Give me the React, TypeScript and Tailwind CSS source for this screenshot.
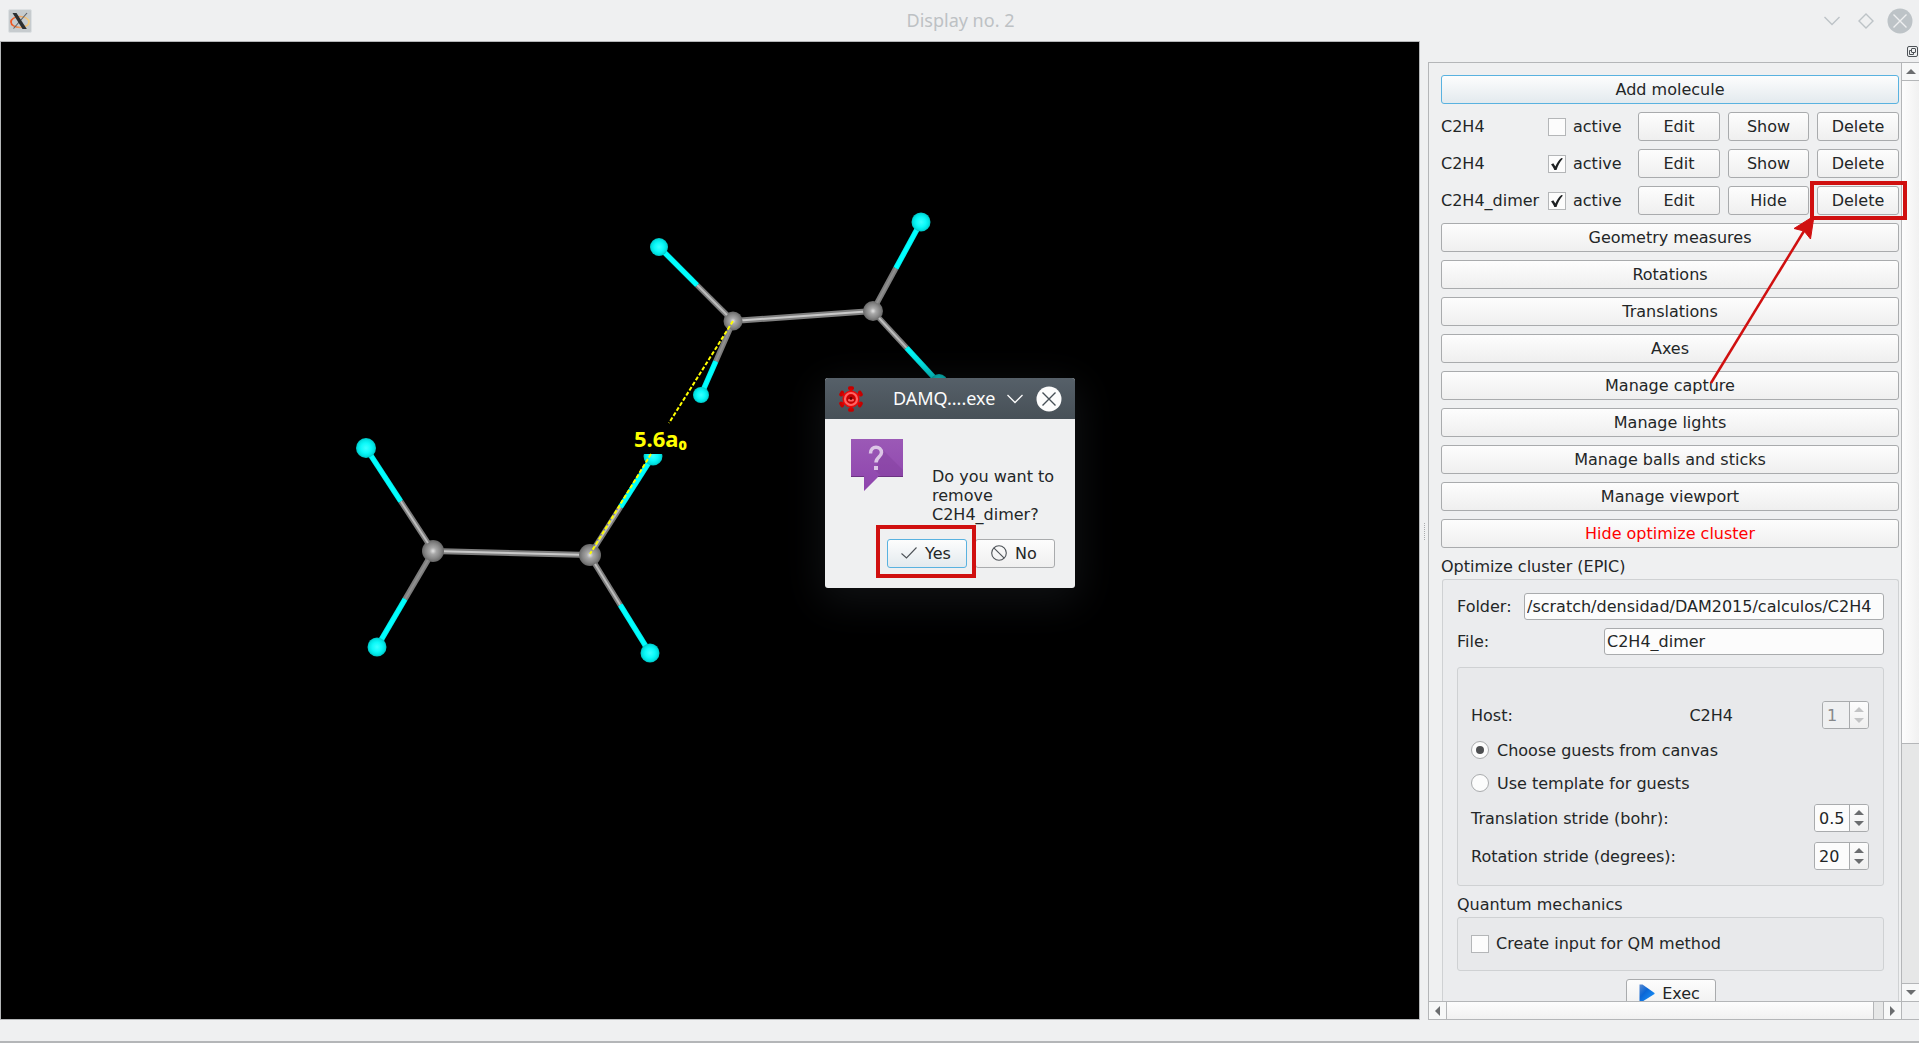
import React, { useId, useState } from "react";

const FACE = "bg-gradient-to-b from-[#fdfdfd] to-[#efefef]";
const EDGE = "border-[#a9abad]";

function PushButton({
  children,
  className = "",
  highlight = false,
}: {
  children: React.ReactNode;
  className?: string;
  highlight?: boolean;
}) {
  return (
    <button
      type="button"
      className={`flex h-[29px] shrink-0 items-center justify-center rounded-[3px] border pb-px ${
        highlight ? "border-[#59b2e0] bg-gradient-to-b from-[#fdfdfd] to-[#e3eaee]" : `${EDGE} ${FACE}`
      } ${className}`}
    >
      {children}
    </button>
  );
}

function CheckBox({ label, defaultChecked = false }: { label: string; defaultChecked?: boolean }) {
  const [checked, setChecked] = useState(defaultChecked);
  const id = useId();
  return (
    <div className="flex items-center gap-[7px]">
      <span className="relative block size-[18px]">
        <input
          id={id}
          type="checkbox"
          checked={checked}
          onChange={(e) => setChecked(e.target.checked)}
          className="block size-[18px] appearance-none border border-[#b4b6b8] bg-[#fcfcfc]"
        />
        {checked && (
          <svg viewBox="0 0 18 18" className="pointer-events-none absolute inset-0 size-[18px]">
            <path
              d="M3 9.500 L5.300 8.200 L7.400 11.600 C8.600 8.300 10.600 5.200 13.400 3 L14.900 3.600 C12 6.800 10 10.400 8.500 15 L6.300 15 C5.600 13 4.600 11.200 3 9.500 Z"
              fill="#1d2022"
            />
          </svg>
        )}
      </span>
      <label htmlFor={id}>{label}</label>
    </div>
  );
}

function Radio({ label, defaultChecked = false }: { label: string; defaultChecked?: boolean }) {
  const id = useId();
  return (
    <div className="flex h-[18px] items-center gap-2">
      <span className="relative block size-[18px]">
        <input
          id={id}
          type="radio"
          name="guests"
          defaultChecked={defaultChecked}
          className="peer block size-[18px] appearance-none rounded-full border border-[#a9abad] bg-[#fcfcfc]"
        />
        <span className="pointer-events-none absolute inset-[5px] hidden rounded-full bg-[#4d4f51] peer-checked:block" />
      </span>
      <label htmlFor={id}>{label}</label>
    </div>
  );
}

function Triangle({ dir, color = "#6b6d6f" }: { dir: "up" | "down" | "left" | "right"; color?: string }) {
  const points = {
    up: "0,5 5,0 10,5",
    down: "0,0 10,0 5,5",
    left: "5,0 5,10 0,5",
    right: "0,0 5,5 0,10",
  }[dir];
  const flat = dir === "up" || dir === "down";
  return (
    <svg viewBox={flat ? "0 0 10 5" : "0 0 5 10"} className={flat ? "h-[5px] w-[10px]" : "h-[10px] w-[5px]"}>
      <polygon points={points} fill={color} />
    </svg>
  );
}

function SpinRow({
  label,
  value,
  note,
  disabled = false,
  width,
}: {
  label: string;
  value: string;
  note?: string;
  disabled?: boolean;
  width: string;
}) {
  const id = useId();
  const color = disabled ? "#c3c4c5" : "#6b6d6f";
  return (
    <div className="flex h-7 items-center">
      <label htmlFor={id}>{label}</label>
      {note && <span className="ml-auto mr-[89px]">{note}</span>}
      <span className={`flex h-7 overflow-hidden rounded-[3px] border ${EDGE} ${note ? "" : "ml-auto"} ${width}`}>
        <input
          id={id}
          type="text"
          defaultValue={value}
          disabled={disabled}
          className={`min-w-0 flex-1 pl-1 outline-none ${disabled ? "bg-[#eff0f1] text-[#86888a]" : "bg-[#fcfcfc]"}`}
        />
        <span className={`flex w-[19px] flex-col items-center justify-center gap-[6px] border-l ${EDGE} ${FACE}`}>
          <button type="button" aria-label={`Increase ${label}`} disabled={disabled}>
            <Triangle dir="up" color={color} />
          </button>
          <button type="button" aria-label={`Decrease ${label}`} disabled={disabled}>
            <Triangle dir="down" color={color} />
          </button>
        </span>
      </span>
    </div>
  );
}

function TextField({ label, value, width }: { label: string; value: string; width: string }) {
  const id = useId();
  return (
    <div className="flex items-center justify-between">
      <label htmlFor={id}>{label}</label>
      <input
        id={id}
        type="text"
        defaultValue={value}
        className={`h-[27px] rounded-[3px] border bg-[#fcfcfc] pb-px pl-[2px] outline-none ${EDGE} ${width}`}
      />
    </div>
  );
}

type Pt = [number, number];

function Bond({ from, to, split = 0.5, dim = false }: { from: Pt; to: Pt; split?: number; dim?: boolean }) {
  const mid: Pt = [from[0] + (to[0] - from[0]) * split, from[1] + (to[1] - from[1]) * split];
  return (
    <g>
      <line x1={from[0]} y1={from[1]} x2={mid[0]} y2={mid[1]} stroke="#7d7d7d" strokeWidth="5.500" />
      <line x1={from[0]} y1={from[1]} x2={mid[0]} y2={mid[1]} stroke={dim ? "#8f8f8f" : "#bcbcbc"} strokeWidth="2" />
      <line x1={mid[0]} y1={mid[1]} x2={to[0]} y2={to[1]} stroke="#00f0f0" strokeWidth="5.500" />
      <line x1={mid[0]} y1={mid[1]} x2={to[0]} y2={to[1]} stroke="#00ffff" strokeWidth="3.500" />
    </g>
  );
}

function CarbonBond({ from, to }: { from: Pt; to: Pt }) {
  return (
    <g>
      <line x1={from[0]} y1={from[1]} x2={to[0]} y2={to[1]} stroke="#7f7f7f" strokeWidth="6" />
      <line x1={from[0]} y1={from[1]} x2={to[0]} y2={to[1]} stroke="#c9c9c9" strokeWidth="2" />
    </g>
  );
}

function Molecules() {
  const hydrogens: [number, number, number][] = [
    [659, 247, 9],
    [921, 222, 9.5],
    [701, 395, 8],
    [939, 383, 9],
    [366, 448, 10],
    [377, 647, 9.5],
    [650, 653, 9.5],
    [653, 456, 9.5],
  ];
  const carbons: [number, number, number][] = [
    [733, 321, 9.5],
    [873, 311, 10],
    [433, 551, 11],
    [590, 555, 11],
  ];
  return (
    <svg viewBox="1 42 1418 977" className="block h-full w-full" role="img" aria-label="C2H4 dimer">
      <defs>
        <radialGradient id="hydrogen">
          <stop offset="0" stopColor="#3cffff" />
          <stop offset="0.5" stopColor="#0cfafa" />
          <stop offset="0.8" stopColor="#00e4e4" />
          <stop offset="1" stopColor="#00c2c2" />
        </radialGradient>
        <radialGradient id="carbon">
          <stop offset="0" stopColor="#e4e4e4" />
          <stop offset="0.3" stopColor="#a8a8a8" />
          <stop offset="0.7" stopColor="#868686" />
          <stop offset="1" stopColor="#666666" />
        </radialGradient>
      </defs>
      <CarbonBond from={[733, 321]} to={[873, 311]} />
      <CarbonBond from={[433, 551]} to={[590, 555]} />
      {carbons.map(([x, y, r]) => (
        <circle key={`${x}-${y}`} cx={x} cy={y} r={r} fill="url(#carbon)" />
      ))}
      <Bond from={[727, 315]} to={[659, 247]} split={0.44} />
      <Bond from={[730, 329]} to={[701, 395]} split={0.49} dim />
      <Bond from={[877, 303]} to={[921, 222]} split={0.43} dim />
      <Bond from={[879, 318]} to={[939, 383]} split={0.46} />
      <Bond from={[428, 543]} to={[366, 448]} split={0.44} />
      <Bond from={[428, 560]} to={[377, 647]} split={0.45} dim />
      <Bond from={[595, 547]} to={[653, 456]} split={0.44} />
      <Bond from={[595, 564]} to={[650, 653]} split={0.46} />
      {hydrogens.map(([x, y, r]) => (
        <circle key={`${x}-${y}`} cx={x} cy={y} r={r} fill="url(#hydrogen)" />
      ))}
      <line x1="733" y1="321" x2="669" y2="423" stroke="#ffff00" strokeWidth="2" strokeDasharray="4 2" />
      <rect x="632" y="424" width="58" height="30" fill="#000000" />
      <line x1="651" y1="454" x2="590" y2="554" stroke="#ffff00" strokeWidth="2" strokeDasharray="4 2" />
      <text x="634" y="447" fill="#ffff00" fontFamily="Noto Sans, sans-serif" fontWeight="700" fontSize="22">
        5.6a₀
      </text>
    </svg>
  );
}

function MessageIcon() {
  return (
    <svg viewBox="0 0 52 52" className="size-[52px]">
      <defs>
        <linearGradient id="bubble" x1="0" y1="0" x2="0" y2="1">
          <stop offset="0" stopColor="#9b59b6" />
          <stop offset="1" stopColor="#8e44ad" />
        </linearGradient>
      </defs>
      <path d="M0 0 H52 V38 H27 L13 52 V38 H0 Z" fill="url(#bubble)" />
      <path d="M31 10 L52 31 V37 H30 L23 30 L27 24 Z" fill="#7d3c98" opacity="0.35" />
      <path d="M0 37.500 H13 M27 37.500 H52" stroke="#6b3382" />
      <path d="M19.500 14.500 C19.500 6 30.500 6.500 30.500 13.500 C30.500 18 25 18 25 23.500" fill="none" stroke="#dcc6e6" strokeWidth="3.500" />
      <rect x="23" y="27" width="4" height="4" fill="#dcc6e6" />
    </svg>
  );
}

function GearIcon() {
  const knobs = [0, 60, 120, 180, 240, 300];
  return (
    <svg viewBox="0 0 26 26" className="size-[26px]">
      {knobs.map((a) => (
        <g key={a} transform={`rotate(${a} 13 13)`}>
          <rect x="10" y="0.300" width="6" height="3.600" rx="1.600" fill="#c40000" />
          <rect x="11.500" y="2.500" width="3" height="4" fill="#d80000" />
        </g>
      ))}
      <circle cx="13" cy="13" r="8.600" fill="#e60a0a" />
      <circle cx="13" cy="13" r="6" fill="none" stroke="#ff6464" strokeWidth="2.200" />
      <circle cx="13" cy="13" r="4.400" fill="#c00000" />
      <ellipse cx="13" cy="14" rx="3" ry="1.600" fill="#ff6060" />
      <circle cx="13" cy="12.500" r="1.400" fill="#600000" />
    </svg>
  );
}

function ConfirmDialog() {
  return (
    <div
      role="dialog"
      aria-label="DAMQ....exe"
      className="absolute left-[824px] top-[336px] w-[250px] rounded-[3px] bg-[#eff0f1] shadow-[0_10px_40px_4px_#101214]"
    >
      <header className="flex h-[41px] items-center rounded-t-[3px] bg-gradient-to-b from-[#566069] to-[#475057] px-[13px] text-[#fcfcfc]">
        <GearIcon />
        <h2 className="ml-[29px] font-['Noto_Sans',sans-serif] text-[18px]">DAMQ....exe</h2>
        <button type="button" aria-label="Shade" className="ml-auto">
          <svg viewBox="0 0 16 10" className="h-[10px] w-4" fill="none" stroke="#fcfcfc" strokeWidth="1.300">
            <path d="M0.500 1 L8 8.500 L15.500 1" />
          </svg>
        </button>
        <button type="button" aria-label="Close" className="ml-[13px]">
          <svg viewBox="0 0 26 26" className="size-[26px]">
            <circle cx="13" cy="13" r="12.500" fill="#fcfcfc" />
            <path d="M6.500 6.500 L19.500 19.500 M19.500 6.500 L6.500 19.500" stroke="#475057" strokeWidth="1.400" />
          </svg>
        </button>
      </header>
      <div className="flex items-start gap-[29px] pl-[26px] pt-5">
        <MessageIcon />
        <p className="mt-[28px] w-[130px] leading-[19px]">Do you want to remove C2H4_dimer?</p>
      </div>
      <div className="flex justify-end gap-2 pb-5 pr-5 pt-[15px]">
        <PushButton highlight className="w-20 gap-2 pr-[2px]">
          <svg viewBox="0 0 16 12" className="h-3 w-4" fill="none" stroke="#4d5257" strokeWidth="1.100">
            <path d="M0.500 6.500 L5.500 11 L15.500 0.500" />
          </svg>
          Yes
        </PushButton>
        <PushButton className="w-20 gap-2 pr-[2px]">
          <svg viewBox="0 0 16 16" className="size-4" fill="none" stroke="#4d5257" strokeWidth="1.100">
            <circle cx="8" cy="8" r="7.300" />
            <path d="M2.800 2.800 L13.200 13.200" />
          </svg>
          No
        </PushButton>
      </div>
      <div className="pointer-events-none absolute bottom-[10px] left-[51px] h-[53px] w-[100px] border-4 border-[#d01010]" />
    </div>
  );
}

const MOLECULES = [
  { name: "C2H4", active: false, toggle: "Show" },
  { name: "C2H4", active: true, toggle: "Show" },
  { name: "C2H4_dimer", active: true, toggle: "Hide" },
];

const TOOLS = [
  "Geometry measures",
  "Rotations",
  "Translations",
  "Axes",
  "Manage capture",
  "Manage lights",
  "Manage balls and sticks",
  "Manage viewport",
];

function Sidebar() {
  return (
    <div className="relative flex min-h-0 flex-1 border-y border-l border-[#b4b6b8]">
      <div className="flex min-w-0 flex-1 flex-col">
        <div className="flex min-h-0 flex-1 flex-col gap-2 overflow-hidden pl-3 pr-[2px] pt-3">
          <PushButton highlight>Add molecule</PushButton>
          {MOLECULES.map((m, i) => (
            <div key={i} className="grid shrink-0 grid-cols-[99px_1fr_82px_81px_82px] items-center gap-x-2">
              <span>{m.name}</span>
              <CheckBox label="active" defaultChecked={m.active} />
              <PushButton>Edit</PushButton>
              <PushButton>{m.toggle}</PushButton>
              <PushButton>Delete</PushButton>
            </div>
          ))}
          {TOOLS.map((t) => (
            <PushButton key={t}>{t}</PushButton>
          ))}
          <PushButton className="text-[#ff0000]">Hide optimize cluster</PushButton>

          <section className="shrink-0">
            <h2 className="pt-px leading-5">Optimize cluster (EPIC)</h2>
            <div className="ml-px mt-[2px] rounded-t-[3px] border border-b-0 border-[#cfd1d3] bg-[#ebecee] px-[14px] pt-[13px]">
              <div className="flex flex-col gap-2">
                <TextField label="Folder:" value="/scratch/densidad/DAM2015/calculos/C2H4" width="w-[360px]" />
                <TextField label="File:" value="C2H4_dimer" width="w-[280px]" />
              </div>
              <div className="mt-3 flex flex-col rounded-[3px] border border-[#cfd1d3] bg-[#e8e9eb] pb-[15px] pl-[13px] pr-[14px] pt-[33px]">
                <SpinRow label="Host:" note="C2H4" value="1" disabled width="w-[47px]" />
                <div className="my-3 flex flex-col gap-[15px]">
                  <Radio label="Choose guests from canvas" defaultChecked />
                  <Radio label="Use template for guests" />
                </div>
                <div className="flex flex-col gap-[10px]">
                  <SpinRow label="Translation stride (bohr):" value="0.5" width="w-[55px]" />
                  <SpinRow label="Rotation stride (degrees):" value="20" width="w-[55px]" />
                </div>
              </div>
              <h3 className="mt-2 pt-px leading-5">Quantum mechanics</h3>
              <div className="mt-[2px] rounded-[3px] border border-[#cfd1d3] bg-[#e8e9eb] pb-[17px] pl-[13px] pr-[14px] pt-4">
                <CheckBox label="Create input for QM method" />
              </div>
              <div className="mt-2 flex justify-center pb-8">
                <PushButton className="w-[90px] gap-[7px] pr-[2px]">
                  <svg viewBox="0 0 16 18" className="h-[18px] w-4">
                    <defs>
                      <linearGradient id="play" x1="0" y1="0" x2="1" y2="1">
                        <stop offset="0" stopColor="#5a8ad0" />
                        <stop offset="0.4" stopColor="#0a66d6" />
                        <stop offset="1" stopColor="#1e9bff" />
                      </linearGradient>
                    </defs>
                    <path d="M0.500 0.500 H3.500 L15.500 9 V10 L3.500 17.500 H0.500 Z" fill="url(#play)" />
                  </svg>
                  Exec
                </PushButton>
              </div>
            </div>
          </section>
        </div>
        <div className="flex h-[18px] shrink-0 border-t border-[#b4b6b8] bg-[#e6e7e7]">
          <button type="button" aria-label="Scroll left" className="flex w-[18px] items-center justify-center border-r border-[#b4b6b8] bg-[#f7f8f8]">
            <Triangle dir="left" />
          </button>
          <div className="flex-1 border-r border-[#b4b6b8] bg-gradient-to-b from-[#fdfdfd] to-[#f1f1f1]" />
          <div className="w-[9px]" />
          <button type="button" aria-label="Scroll right" className="flex w-[18px] items-center justify-center border-l border-[#b4b6b8] bg-[#f7f8f8]">
            <Triangle dir="right" />
          </button>
        </div>
      </div>

      <div className="flex w-[18px] shrink-0 flex-col border-l border-[#b4b6b8] bg-[#e6e7e7]">
        <button type="button" aria-label="Scroll up" className="flex h-[18px] items-center justify-center border-b border-[#b4b6b8] bg-[#f7f8f8]">
          <Triangle dir="up" />
        </button>
        <div className="basis-0 grow-[663] border-b border-[#b4b6b8] bg-gradient-to-r from-[#fdfdfd] to-[#f1f1f1]" />
        <div className="basis-0 grow-[240]" />
        <button type="button" aria-label="Scroll down" className="flex h-[18px] items-center justify-center border-t border-[#b4b6b8] bg-[#f7f8f8]">
          <Triangle dir="down" />
        </button>
        <div className="h-[18px] border-t border-[#b4b6b8] bg-[#eff0f1]" />
      </div>

      <div className="pointer-events-none absolute right-3 top-[118px] h-[39px] w-[97px] border-4 border-[#d01010]" />
      <svg viewBox="0 0 110 174" className="pointer-events-none absolute right-[103px] top-[150px] h-[174px] w-[110px]">
        <path d="M5 170 L98 18" stroke="#d01010" strokeWidth="2.500" />
        <path d="M108 3 L104.500 26 L98 18 L88 15.500 Z" fill="#d01010" stroke="#d01010" strokeLinejoin="round" />
      </svg>
    </div>
  );
}

export default function App() {
  return (
    <div className="flex h-screen w-full flex-col overflow-hidden bg-[#eff0f1] font-['DejaVu_Sans',sans-serif] text-[16px] leading-[19px] text-[#232627]">
      <header className="flex h-[41px] shrink-0 items-center justify-between pl-2 pr-[6px]">
        <div className="flex flex-1">
          <svg viewBox="0 0 24 24" className="size-6">
            <defs>
              <linearGradient id="ring" x1="0" y1="0" x2="1" y2="0">
                <stop offset="0" stopColor="#f0501e" />
                <stop offset="0.5" stopColor="#f0a060" />
                <stop offset="1" stopColor="#f5cf80" />
              </linearGradient>
            </defs>
            <rect x="0.500" y="0.500" width="23" height="23" rx="1.500" fill="#c6cbce" stroke="#dde1e3" />
            <ellipse cx="12" cy="13" rx="9" ry="5.500" fill="none" stroke="url(#ring)" strokeWidth="1.700" />
            <path d="M19 4 L5.500 19.500" stroke="#5a5f63" strokeWidth="1.100" />
            <path d="M4.500 4 H8.500 L18.800 20 H14.500 Z" fill="#2c2f31" />
          </svg>
        </div>
        <h1 className="font-['Noto_Sans',sans-serif] text-[18px] text-[#bdc1c4]">Display no. 2</h1>
        <div className="flex flex-1 items-center justify-end">
          <button type="button" aria-label="Minimize">
            <svg viewBox="0 0 16 10" className="h-[10px] w-4" fill="none" stroke="#bdc3c7" strokeWidth="1.400">
              <path d="M0.500 1 L8 8.500 L15.500 1" />
            </svg>
          </button>
          <button type="button" aria-label="Maximize" className="ml-[18px]">
            <svg viewBox="0 0 16 16" className="size-4" fill="none" stroke="#bdc3c7" strokeWidth="1.400">
              <path d="M8 1 L15 8 L8 15 L1 8 Z" />
            </svg>
          </button>
          <button type="button" aria-label="Close" className="ml-[13px]">
            <svg viewBox="0 0 26 26" className="size-[26px]">
              <circle cx="13" cy="13" r="12.500" fill="#bdc3c7" />
              <path d="M6.500 6.500 L19.500 19.500 M19.500 6.500 L6.500 19.500" stroke="#eff0f1" strokeWidth="1.400" />
            </svg>
          </button>
        </div>
      </header>

      <main className="flex min-h-0 flex-1">
        <div className="relative min-w-0 flex-1 border border-[#b4b6b8] bg-black">
          <Molecules />
          <ConfirmDialog />
        </div>
        <div className="flex w-2 shrink-0 items-center justify-center">
          <div className="mt-[2px] h-[17px] border-l border-dotted border-[#a9abad]" />
        </div>
        <aside className="flex w-[491px] shrink-0 flex-col">
          <div className="flex h-[21px] shrink-0 items-center justify-end pr-px">
            <button type="button" aria-label="Float panel">
              <svg viewBox="0 0 11 11" className="size-[11px]" fill="none" stroke="#4d5257">
                <rect x="0.500" y="0.500" width="10" height="10" rx="1.500" />
                <rect x="4.500" y="2.500" width="4" height="4" rx="0.500" />
                <path d="M4 4.500 H2.500 V8.500 H6.500 V7" />
              </svg>
            </button>
          </div>
          <Sidebar />
        </aside>
      </main>

      <footer className="h-[23px] shrink-0 border-b-2 border-[#b4b6b8]" />
    </div>
  );
}
